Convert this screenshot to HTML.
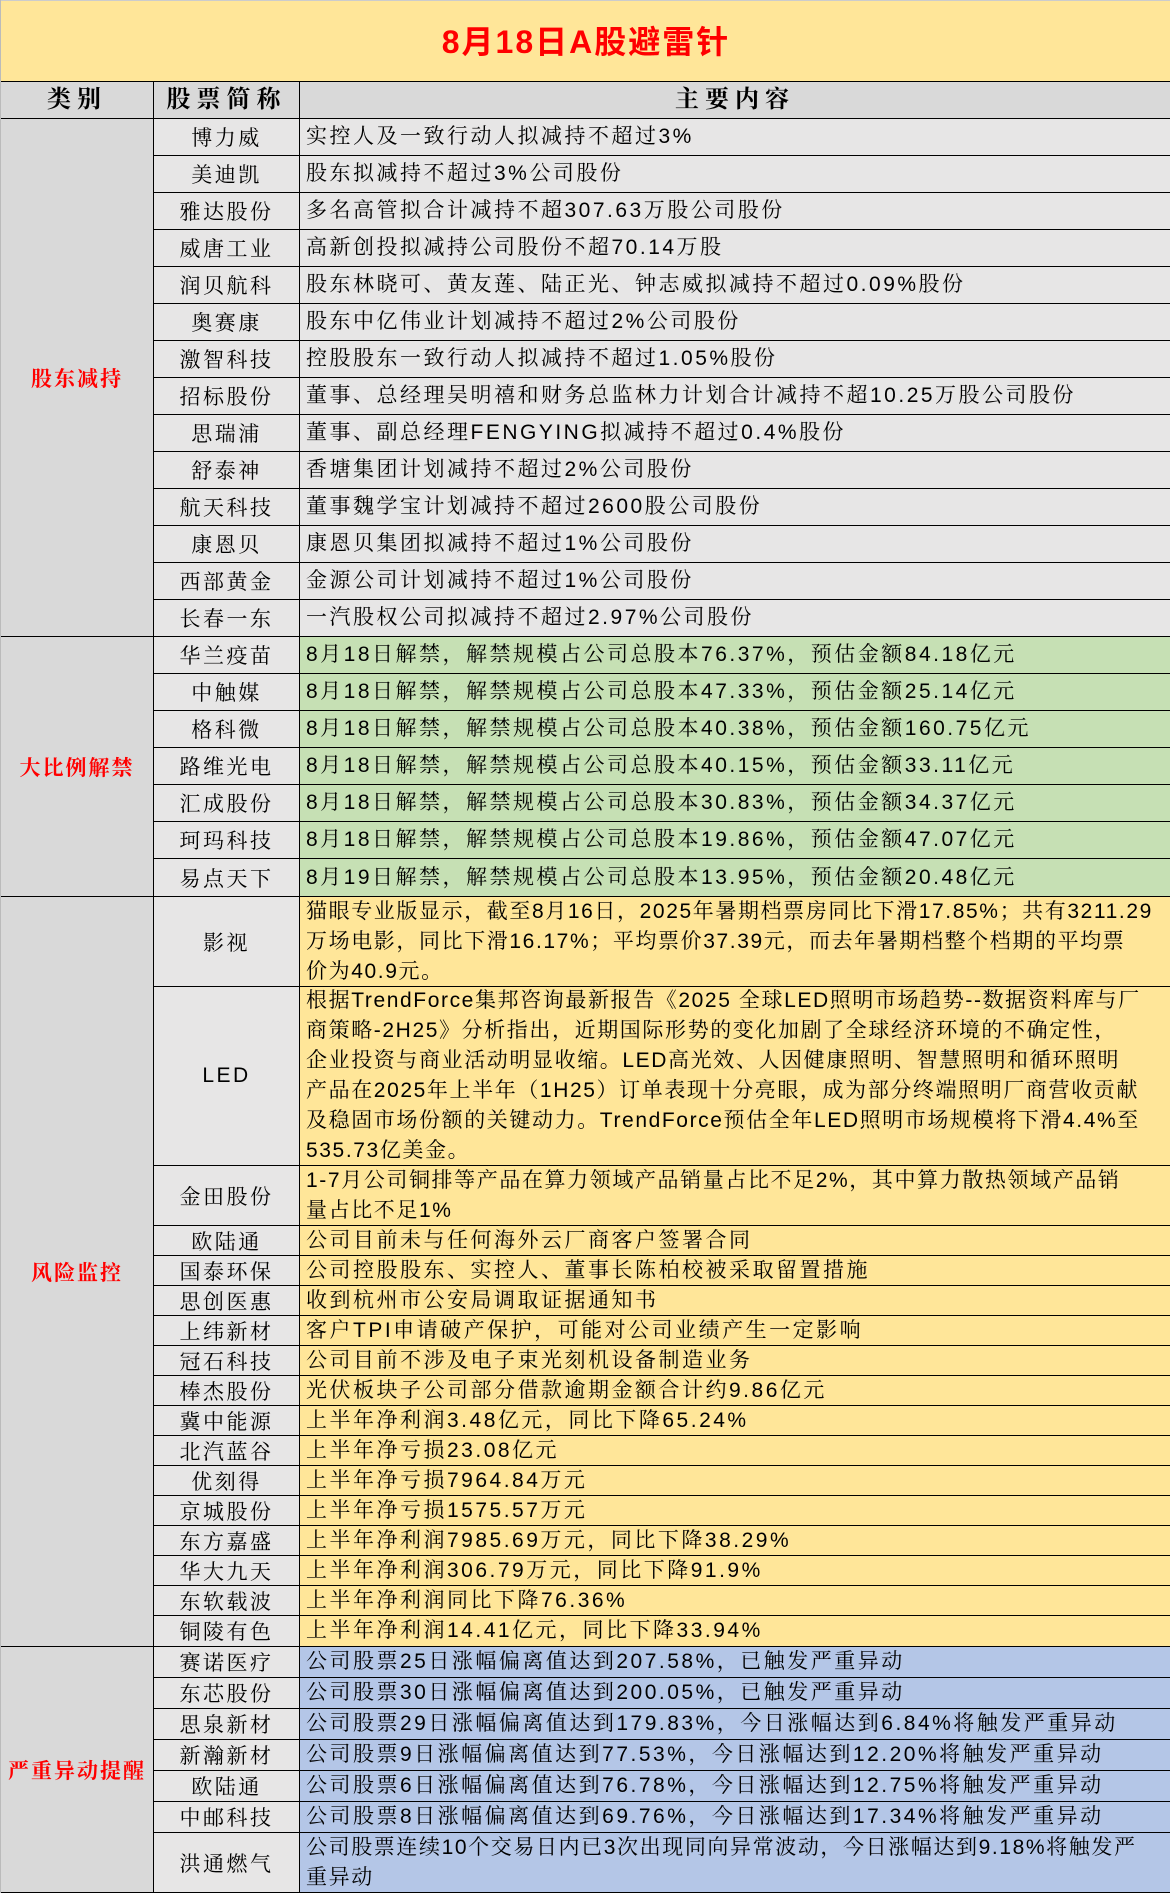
<!DOCTYPE html>
<html><head><meta charset="utf-8"><style>
*{margin:0;padding:0;box-sizing:border-box}
body{width:1170px;height:1893px;overflow:hidden;background:#fff;font-family:"Liberation Sans","Noto Serif CJK SC",serif;color:#000}
.wrap{position:relative;width:1170px;height:1893px;border-left:1px solid #bbb;border-right:1px solid #333}
.title{position:absolute;left:0;top:0;width:1170px;height:82px;background:#ffe699;border-top:1px solid #ccc;border-bottom:1px solid #000;text-align:center;line-height:82px;color:#f00;font-weight:bold;font-size:32px;letter-spacing:2px;font-family:"Liberation Sans","Noto Sans CJK SC",sans-serif}
.hdr{position:absolute;left:0;top:82px;width:1170px;height:37px;background:#d9d9d9;border-bottom:1px solid #000;font-weight:bold;font-size:24px;line-height:36px;letter-spacing:6px}
.hdr div{position:absolute;top:0;height:36px;text-align:center}
.sec{position:absolute;left:0;width:1170px}
.cat{position:absolute;left:0;top:0;bottom:0;width:153px;background:#d9d9d9;border-right:1px solid #000;border-bottom:1px solid #000;display:flex;align-items:center;justify-content:center;color:#f00;font-weight:bold;font-size:21px;letter-spacing:2px}
.rows{position:absolute;left:153px;top:0;right:0}
.r{position:relative;border-bottom:1px solid #000;display:flex}
.n{width:146px;flex:none;background:#e7e6e6;border-right:1px solid #000;display:flex;align-items:center;justify-content:center;font-size:21px;letter-spacing:2.5px;white-space:nowrap}
.c{flex:1;padding-left:6px;display:flex;align-items:center;font-size:21px;letter-spacing:2.5px;white-space:nowrap;overflow:hidden;line-height:30px}
.g .c{background:#e7e6e6}.gr .c{background:#c6e0b4}.y .c{background:#ffe699}.b .c{background:#b4c6e7}
.r37{height:37px}.r38{height:38px}.r30{height:30px}.r29{height:29px}.r31{height:31px}
.t{letter-spacing:1.6px}
</style></head><body><div class="wrap">
<div class="title">8月18日A股避雷针</div>
<div class="hdr"><div style="left:0;width:153px;border-right:1px solid #000">类别</div><div style="left:153px;width:146px;border-right:1px solid #000">股票简称</div><div style="left:299px;width:870px">主要内容</div></div>

<div class="sec g" style="top:119px;height:518px"><div class="cat">股东减持</div><div class="rows">
<div class="r r37"><div class="n">博力威</div><div class="c">实控人及一致行动人拟减持不超过3%</div></div>
<div class="r r37"><div class="n">美迪凯</div><div class="c">股东拟减持不超过3%公司股份</div></div>
<div class="r r37"><div class="n">雅达股份</div><div class="c">多名高管拟合计减持不超307.63万股公司股份</div></div>
<div class="r r37"><div class="n">威唐工业</div><div class="c">高新创投拟减持公司股份不超70.14万股</div></div>
<div class="r r37"><div class="n">润贝航科</div><div class="c">股东林晓可、黄友莲、陆正光、钟志威拟减持不超过0.09%股份</div></div>
<div class="r r37"><div class="n">奥赛康</div><div class="c">股东中亿伟业计划减持不超过2%公司股份</div></div>
<div class="r r37"><div class="n">激智科技</div><div class="c">控股股东一致行动人拟减持不超过1.05%股份</div></div>
<div class="r r37"><div class="n">招标股份</div><div class="c">董事、总经理吴明禧和财务总监林力计划合计减持不超10.25万股公司股份</div></div>
<div class="r r37"><div class="n">思瑞浦</div><div class="c">董事、副总经理FENGYING拟减持不超过0.4%股份</div></div>
<div class="r r37"><div class="n">舒泰神</div><div class="c">香塘集团计划减持不超过2%公司股份</div></div>
<div class="r r37"><div class="n">航天科技</div><div class="c">董事魏学宝计划减持不超过2600股公司股份</div></div>
<div class="r r37"><div class="n">康恩贝</div><div class="c">康恩贝集团拟减持不超过1%公司股份</div></div>
<div class="r r37"><div class="n">西部黄金</div><div class="c">金源公司计划减持不超过1%公司股份</div></div>
<div class="r r37"><div class="n">长春一东</div><div class="c">一汽股权公司拟减持不超过2.97%公司股份</div></div>
</div></div>

<div class="sec gr" style="top:637px;height:260px"><div class="cat">大比例解禁</div><div class="rows">
<div class="r r37"><div class="n">华兰疫苗</div><div class="c">8月18日解禁，解禁规模占公司总股本76.37%，预估金额84.18亿元</div></div>
<div class="r r37"><div class="n">中触媒</div><div class="c">8月18日解禁，解禁规模占公司总股本47.33%，预估金额25.14亿元</div></div>
<div class="r r37"><div class="n">格科微</div><div class="c">8月18日解禁，解禁规模占公司总股本40.38%，预估金额160.75亿元</div></div>
<div class="r r37"><div class="n">路维光电</div><div class="c">8月18日解禁，解禁规模占公司总股本40.15%，预估金额33.11亿元</div></div>
<div class="r r37"><div class="n">汇成股份</div><div class="c">8月18日解禁，解禁规模占公司总股本30.83%，预估金额34.37亿元</div></div>
<div class="r r37"><div class="n">珂玛科技</div><div class="c">8月18日解禁，解禁规模占公司总股本19.86%，预估金额47.07亿元</div></div>
<div class="r r38"><div class="n">易点天下</div><div class="c">8月19日解禁，解禁规模占公司总股本13.95%，预估金额20.48亿元</div></div>
</div></div>

<div class="sec y" style="top:897px;height:750px"><div class="cat">风险监控</div><div class="rows">
<div class="r" style="height:90px"><div class="n">影视</div><div class="c t">猫眼专业版显示，截至8月16日，2025年暑期档票房同比下滑17.85%；共有3211.29<br>万场电影，同比下滑16.17%；平均票价37.39元，而去年暑期档整个档期的平均票<br>价为40.9元。</div></div>
<div class="r" style="height:179px"><div class="n">LED</div><div class="c t">根据TrendForce集邦咨询最新报告《2025 全球LED照明市场趋势--数据资料库与厂<br>商策略-2H25》分析指出，近期国际形势的变化加剧了全球经济环境的不确定性，<br>企业投资与商业活动明显收缩。LED高光效、人因健康照明、智慧照明和循环照明<br>产品在2025年上半年（1H25）订单表现十分亮眼，成为部分终端照明厂商营收贡献<br>及稳固市场份额的关键动力。TrendForce预估全年LED照明市场规模将下滑4.4%至<br>535.73亿美金。</div></div>
<div class="r" style="height:60px"><div class="n">金田股份</div><div class="c t">1-7月公司铜排等产品在算力领域产品销量占比不足2%，其中算力散热领域产品销<br>量占比不足1%</div></div>
<div class="r r30"><div class="n">欧陆通</div><div class="c">公司目前未与任何海外云厂商客户签署合同</div></div>
<div class="r r30"><div class="n">国泰环保</div><div class="c">公司控股股东、实控人、董事长陈柏校被采取留置措施</div></div>
<div class="r r30"><div class="n">思创医惠</div><div class="c">收到杭州市公安局调取证据通知书</div></div>
<div class="r r30"><div class="n">上纬新材</div><div class="c">客户TPI申请破产保护，可能对公司业绩产生一定影响</div></div>
<div class="r r30"><div class="n">冠石科技</div><div class="c">公司目前不涉及电子束光刻机设备制造业务</div></div>
<div class="r r30"><div class="n">棒杰股份</div><div class="c">光伏板块子公司部分借款逾期金额合计约9.86亿元</div></div>
<div class="r r30"><div class="n">冀中能源</div><div class="c">上半年净利润3.48亿元，同比下降65.24%</div></div>
<div class="r r30"><div class="n">北汽蓝谷</div><div class="c">上半年净亏损23.08亿元</div></div>
<div class="r r30"><div class="n">优刻得</div><div class="c">上半年净亏损7964.84万元</div></div>
<div class="r r30"><div class="n">京城股份</div><div class="c">上半年净亏损1575.57万元</div></div>
<div class="r r30"><div class="n">东方嘉盛</div><div class="c">上半年净利润7985.69万元，同比下降38.29%</div></div>
<div class="r r30"><div class="n">华大九天</div><div class="c">上半年净利润306.79万元，同比下降91.9%</div></div>
<div class="r r30"><div class="n">东软载波</div><div class="c">上半年净利润同比下降76.36%</div></div>
<div class="r r31"><div class="n">铜陵有色</div><div class="c">上半年净利润14.41亿元，同比下降33.94%</div></div>
</div></div>

<div class="sec b" style="top:1647px;height:246px"><div class="cat">严重异动提醒</div><div class="rows">
<div class="r r31"><div class="n">赛诺医疗</div><div class="c">公司股票25日涨幅偏离值达到207.58%，已触发严重异动</div></div>
<div class="r r31"><div class="n">东芯股份</div><div class="c">公司股票30日涨幅偏离值达到200.05%，已触发严重异动</div></div>
<div class="r r31"><div class="n">思泉新材</div><div class="c">公司股票29日涨幅偏离值达到179.83%，今日涨幅达到6.84%将触发严重异动</div></div>
<div class="r r31"><div class="n">新瀚新材</div><div class="c">公司股票9日涨幅偏离值达到77.53%，今日涨幅达到12.20%将触发严重异动</div></div>
<div class="r r31"><div class="n">欧陆通</div><div class="c">公司股票6日涨幅偏离值达到76.78%，今日涨幅达到12.75%将触发严重异动</div></div>
<div class="r r31"><div class="n">中邮科技</div><div class="c">公司股票8日涨幅偏离值达到69.76%，今日涨幅达到17.34%将触发严重异动</div></div>
<div class="r" style="height:60px"><div class="n">洪通燃气</div><div class="c t">公司股票连续10个交易日内已3次出现同向异常波动，今日涨幅达到9.18%将触发严<br>重异动</div></div>
</div></div>
</div></body></html>
